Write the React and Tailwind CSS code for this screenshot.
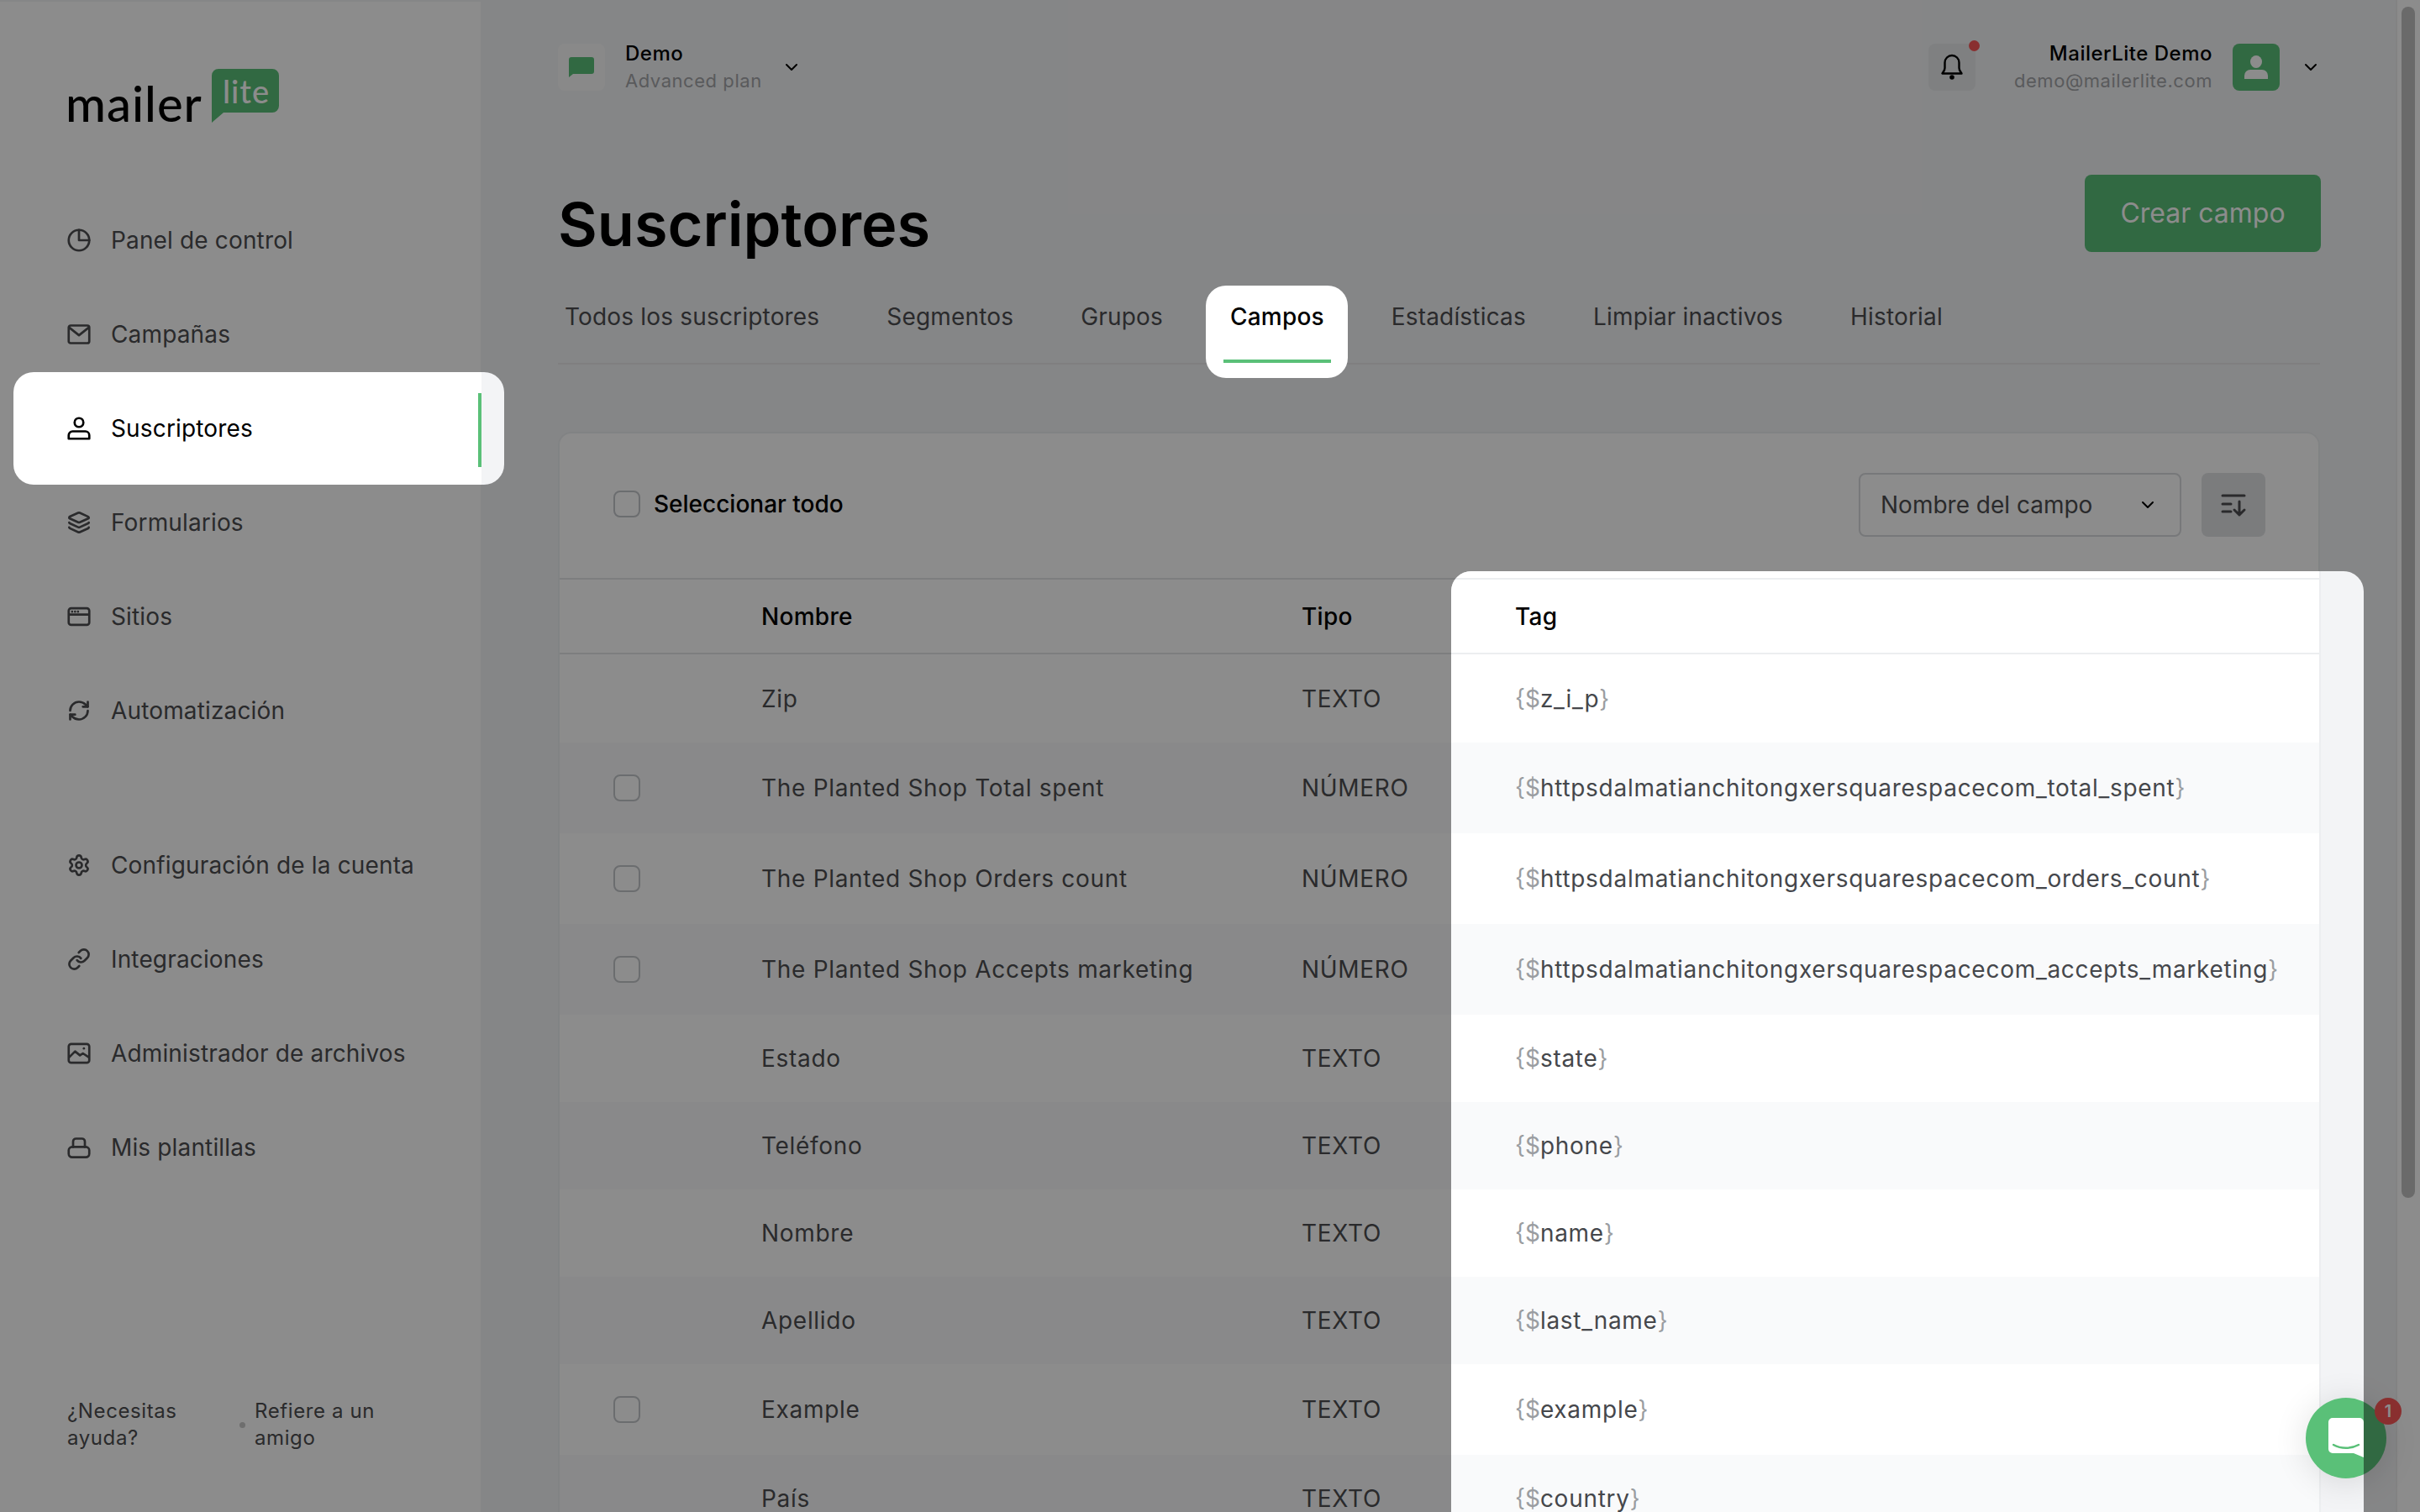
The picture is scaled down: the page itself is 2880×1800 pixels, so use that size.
import { ChevronDown, Layers, Link, RefreshCw, Settings } from 'lucide-react';

const iconProps = {
  width: 28,
  height: 28,
  viewBox: '0 0 24 24',
  fill: 'none',
  stroke: 'currentColor',
  strokeWidth: 2.3,
  strokeLinecap: 'round',
  strokeLinejoin: 'round',
};

const PieIcon = () => (
  <svg {...iconProps}>
    <circle cx="12" cy="12" r="10.5" />
    <path d="M12 1.5V12h10.5" />
  </svg>
);
const MailIcon = () => (
  <svg {...iconProps}>
    <rect x="1.5" y="3" width="21" height="18" rx="2" />
    <path d="M2 5l10 8 10-8" />
  </svg>
);
const UserIcon = () => (
  <svg {...iconProps}>
    <circle cx="12" cy="6" r="4.500" />
    <path d="M1.5 22.500V19a4 4 0 0 1 4-4h13a4 4 0 0 1 4 4v3.500z" />
  </svg>
);
const SiteIcon = () => (
  <svg {...iconProps}>
    <rect x="1.5" y="3.500" width="21" height="17" rx="2.500" />
    <path d="M2 10h20" />
    <path d="M5 7h.01M8 7h.01M11 7h.01" />
  </svg>
);
const ImageIcon = () => (
  <svg {...iconProps}>
    <rect x="1.5" y="2.500" width="21" height="19" rx="2.500" />
    <path d="M2 16l6-6 5 4 3-2 6 4" />
    <path d="M17 7h.01" />
  </svg>
);
const TemplateIcon = () => (
  <svg {...iconProps}>
    <rect x="1.5" y="11.500" width="21" height="10.500" rx="3.500" />
    <path d="M6 11.500V6a3 3 0 0 1 3-3h6a3 3 0 0 1 3 3v5.500" />
  </svg>
);
const SortIcon = () => (
  <svg width="32" height="32" viewBox="0 0 32 32" fill="none" stroke="currentColor" strokeWidth="3" strokeLinecap="round" strokeLinejoin="round">
    <path d="M3 5h26M3 15h10M3 24h10M23 12v16M17 22l6 6 6-6" />
  </svg>
);
const BellIcon = () => (
  <svg width="26" height="32" viewBox="0 0 26 32">
    <path d="M13 2a8.500 8.500 0 0 0-8.500 8.500V17c0 3-2 4.500-3 6.500h23c-1-2-3-3.500-3-6.500v-6.500A8.500 8.500 0 0 0 13 2z" fill="none" stroke="currentColor" strokeWidth="2.400" strokeLinejoin="round" />
    <circle cx="13" cy="28" r="2.800" fill="currentColor" />
  </svg>
);

const topNav = [
  { label: 'Panel de control', icon: <PieIcon /> },
  { label: 'Campañas', icon: <MailIcon /> },
  { label: 'Suscriptores', icon: <UserIcon />, active: true },
  { label: 'Formularios', icon: <Layers size={28} strokeWidth={2.3} /> },
  { label: 'Sitios', icon: <SiteIcon /> },
  { label: 'Automatización', icon: <RefreshCw size={28} strokeWidth={2.3} /> },
];

const bottomNav = [
  { label: 'Configuración de la cuenta', icon: <Settings size={28} strokeWidth={2.3} /> },
  { label: 'Integraciones', icon: <Link size={28} strokeWidth={2.3} /> },
  { label: 'Administrador de archivos', icon: <ImageIcon /> },
  { label: 'Mis plantillas', icon: <TemplateIcon /> },
];

const tabs = ['Todos los suscriptores', 'Segmentos', 'Grupos', 'Campos', 'Estadísticas', 'Limpiar inactivos', 'Historial'];

const rows = [
  { name: 'Zip', type: 'TEXTO', tag: 'z_i_p', h: 'h-[105px]' },
  { name: 'The Planted Shop Total spent', type: 'NÚMERO', tag: 'httpsdalmatianchitongxersquarespacecom_total_spent', h: 'h-[108px]', check: true },
  { name: 'The Planted Shop Orders count', type: 'NÚMERO', tag: 'httpsdalmatianchitongxersquarespacecom_orders_count', h: 'h-[108px]', check: true },
  { name: 'The Planted Shop Accepts marketing', type: 'NÚMERO', tag: 'httpsdalmatianchitongxersquarespacecom_accepts_marketing', h: 'h-[108px]', check: true },
  { name: 'Estado', type: 'TEXTO', tag: 'state', h: 'h-[104px]' },
  { name: 'Teléfono', type: 'TEXTO', tag: 'phone', h: 'h-[104px]' },
  { name: 'Nombre', type: 'TEXTO', tag: 'name', h: 'h-[104px]' },
  { name: 'Apellido', type: 'TEXTO', tag: 'last_name', h: 'h-[104px]' },
  { name: 'Example', type: 'TEXTO', tag: 'example', h: 'h-[108px]', check: true },
  { name: 'País', type: 'TEXTO', tag: 'country', h: 'h-[104px]' },
];

function Checkbox() {
  return <span className="block w-[32px] h-[32px] rounded-lg border-2 border-[#c4c6ca] bg-white" />;
}

function NavItem({ label, icon, active }) {
  if (active) {
    return (
      <div className="relative z-20 flex items-center gap-[24px] h-[112px] pl-[80px] text-black">
        {/* hole in the dimmed overlay */}
        <div className="absolute -z-10 left-[16px] top-[-11px] w-[584px] h-[134px] rounded-3xl bg-[linear-gradient(90deg,#ffffff_557px,#f3f4f6_557px)]" />
        <div className="absolute left-[569px] top-[14px] w-[4px] h-[88px] bg-[#5ac078]" />
        {icon}
        <span>{label}</span>
      </div>
    );
  }
  return (
    <div className="flex items-center gap-[24px] h-[112px] pl-[80px] text-[#4d4e50]">
      {icon}
      <span>{label}</span>
    </div>
  );
}

function ChatIcon() {
  return (
    <svg width="44" height="48" viewBox="0 0 44 48" className="block">
      <path d="M6 0h32a5 5 0 0 1 5 5v42l-12-5H6a5 5 0 0 1-5-5V5a5 5 0 0 1 5-5z" fill="#ffffff" />
      <path d="M7 32c9 5 21 5 30 0" fill="none" stroke="#5ac078" strokeWidth="2.500" strokeLinecap="round" />
    </svg>
  );
}

function ChatButton() {
  return (
    <div className="flex items-center justify-center w-[96px] h-[96px] rounded-full bg-[#5ac078] shadow-[0_4px_40px_rgba(0,0,0,0.12)]">
      <ChatIcon />
    </div>
  );
}

export default function App() {
  return (
    <div className="relative flex w-full h-screen overflow-hidden bg-[#f3f4f6] font-[Inter,sans-serif] text-[#4d4e50]">
      {/* Sidebar */}
      <aside className="flex flex-col shrink-0 w-[574px] mt-[2px] bg-white border-r-2 border-[#f3f4f6] text-[28px] tracking-[0.15px]">
        <div className="relative h-[228px] pl-[80px]">
          <div className="absolute left-[78px] top-[89px] text-[58px] leading-[64px] font-medium tracking-[1px] text-black font-[Lato,sans-serif]">mailer</div>
          <div className="absolute left-[252px] top-[80px] w-[80px] h-[64px]">
            <svg width="80" height="64" viewBox="0 0 80 64" className="absolute inset-0">
              <path d="M8 0h64a8 8 0 0 1 8 8v36a8 8 0 0 1-8 8H14L0 64V8a8 8 0 0 1 8-8z" fill="#5ac078" />
            </svg>
            <span className="absolute left-[13px] top-[6px] text-[38px] leading-[40px] font-medium tracking-[1px] text-white font-[Lato,sans-serif]">lite</span>
          </div>
        </div>
        <nav>
          {topNav.map((item) => (
            <NavItem key={item.label} {...item} />
          ))}
        </nav>
        <nav className="mt-[72px]">
          {bottomNav.map((item) => (
            <NavItem key={item.label} {...item} />
          ))}
        </nav>
        <div className="flex items-center mt-auto mb-[72px] pl-[80px] text-[24px] leading-[32px] tracking-wide">
          <span className="w-[205px]">¿Necesitas ayuda?</span>
          <span className="w-[7px] h-[7px] rounded-full bg-[#c8c8c8] mr-[11px]" />
          <span className="w-[180px]">Refiere a un amigo</span>
        </div>
      </aside>

      {/* Main */}
      <main className="flex-1 min-w-0 pt-[52px] pl-[90px] pr-[90px]">
        <header className="flex items-center justify-between h-[56px]">
          <div className="flex items-center">
            <div className="flex items-center justify-center w-[56px] h-[56px] rounded-lg bg-[#fafafa]">
              <svg width="30" height="24" viewBox="0 0 30 24">
                <path d="M3 0h24a3 3 0 0 1 3 3v14a3 3 0 0 1-3 3H5l-5 4V3a3 3 0 0 1 3-3z" fill="#5ac078" />
              </svg>
            </div>
            <div className="ml-[24px] leading-[33px]">
              <div className="text-[24px] font-medium tracking-[0.5px] text-black">Demo</div>
              <div className="text-[22px] tracking-wide text-[#a3a5a8]">Advanced plan</div>
            </div>
            <ChevronDown size={24} strokeWidth={2} className="ml-[23px] text-black" />
          </div>
          <div className="flex items-center -mr-[1px]">
            <div className="relative flex items-center justify-center w-[56px] h-[56px] rounded-lg bg-[#e8eaec] text-black">
              <BellIcon />
              <span className="absolute right-[-5px] top-[-4px] w-[13px] h-[13px] rounded-full bg-[#f95757]" />
            </div>
            <div className="ml-[46px] text-right leading-[33px]">
              <div className="text-[24px] font-medium tracking-[0.5px] text-black">MailerLite Demo</div>
              <div className="text-[22px] tracking-wide text-[#a3a5a8]">demo@mailerlite.com</div>
            </div>
            <div className="flex items-center justify-center ml-[24px] w-[56px] h-[56px] rounded-lg bg-[#5ac078]">
              <svg width="28" height="28" viewBox="0 0 28 28" fill="#ffffff">
                <ellipse cx="14" cy="7.500" rx="7" ry="7.500" />
                <path d="M0 28v-4a7 7 0 0 1 7-7h14a7 7 0 0 1 7 7v4z" />
              </svg>
            </div>
            <ChevronDown size={24} strokeWidth={2} className="ml-[25px] text-black" />
          </div>
        </header>

        <div className="flex items-start justify-between h-[92px] mt-[100px]">
          <h1 className="mt-[13px] text-[72px] leading-[92px] font-semibold text-black">Suscriptores</h1>
          <button className="w-[281px] h-[92px] -mr-[1px] rounded-lg bg-[#5ac078] text-white text-[32px]">Crear campo</button>
        </div>

        {/* Tabs */}
        <div className="flex gap-[64px] mt-[44px] h-[90px] border-b-2 border-[#e7e8ea] text-[28px] leading-[36px] tracking-[0.18px]">
          {tabs.map((tab) =>
            tab === 'Campos' ? (
              <div key={tab} className="relative z-20 h-[88px] px-[8px] pt-[15px] font-medium text-black">
                <div className="absolute -z-10 left-[-21px] right-[-20px] top-[-4px] bottom-[-18px] rounded-3xl bg-white" />
                <div className="absolute left-0 right-0 bottom-0 h-[4px] bg-[#5ac078]" />
                {tab}
              </div>
            ) : (
              <div key={tab} className="h-[88px] px-[8px] pt-[15px]">{tab}</div>
            )
          )}
        </div>

        {/* Fields card */}
        <section className="relative mt-[80px] rounded-t-2xl border-2 border-[#eceef0] bg-white">
          <div className="flex items-center justify-between h-[174px] pb-[2px] pl-[64px] pr-[63px] border-b-2 border-[#e4e5e7]">
            <label className="flex items-center gap-[16px] pb-[3px] text-[28px] font-medium text-black">
              <Checkbox />
              Seleccionar todo
            </label>
            <div className="flex items-center gap-[24px]">
              <div className="flex items-center justify-between w-[384px] h-[76px] pl-[24px] pr-[26px] rounded-lg border-2 border-[#d9dbde] text-[28px]">
                Nombre del campo
                <ChevronDown size={24} strokeWidth={2} className="text-black" />
              </div>
              <div className="flex items-center justify-center w-[76px] h-[76px] rounded-lg bg-[#e0e2e4]">
                <SortIcon />
              </div>
            </div>
          </div>

          <div className="flex items-center h-[89px] border-b-2 border-[#e4e5e7] text-[28px] font-medium tracking-[0.3px] text-black">
            <div className="w-[240px] shrink-0" />
            <div className="w-[643px] shrink-0">Nombre</div>
            <div>Tipo</div>
          </div>
          {rows.map((row, i) => (
            <div key={i} className={`flex items-center ${row.h} text-[28px] tracking-wide ${i % 2 === 1 ? 'bg-[#f9fafb]' : 'bg-white'}`}>
              <div className="w-[240px] shrink-0 pl-[64px]">{row.check && <Checkbox />}</div>
              <div className="w-[643px] shrink-0">{row.name}</div>
              <div>{row.type}</div>
            </div>
          ))}

          {/* Highlighted tag column, sits over the dim layer */}
          <div className="absolute z-20 left-[1061px] top-[164px] w-[1086px] h-[1200px] overflow-hidden rounded-t-3xl bg-[#f3f4f6]">
            <div className="w-[1035px] h-full pt-[8px] bg-white border-r-2 border-[#eceef0]">
              <div className="flex items-center h-[91px] pl-[76px] border-y-2 border-[#eceef0] text-[28px] font-medium tracking-[0.3px] text-black">Tag</div>
              {rows.map((row, i) => (
                <div key={i} className={`flex items-center ${row.h} pl-[76px] text-[28px] tracking-[0.72px] text-[#45474b] ${i % 2 === 1 ? 'bg-[#f9fafb]' : 'bg-white'}`}>
                  <span className="tracking-normal text-[#9a9da1]">{'{$'}</span>
                  {row.tag}
                  <span className="text-[#9a9da1]">{'}'}</span>
                </div>
              ))}
            </div>
            <div className="absolute left-[1017px] top-[984px]">
              <ChatButton />
            </div>
          </div>
        </section>
      </main>

      {/* Scrollbar */}
      <div className="relative shrink-0 w-[29px] bg-white border-l-2 border-[#eeeeee]">
        <div className="absolute left-[5px] top-[8px] w-[16px] h-[1418px] rounded-full bg-[#c1c1c1]" />
      </div>

      {/* Chat launcher */}
      <div className="absolute left-[2744px] top-[1664px]">
        <ChatButton />
        <span className="absolute left-[82px] top-[0px] flex items-center justify-center w-[32px] h-[32px] rounded-full bg-[#f95757] text-white text-[20px] font-semibold">1</span>
      </div>

      {/* Dim layer */}
      <div className="absolute inset-0 z-10 bg-black/45" />
    </div>
  );
}
